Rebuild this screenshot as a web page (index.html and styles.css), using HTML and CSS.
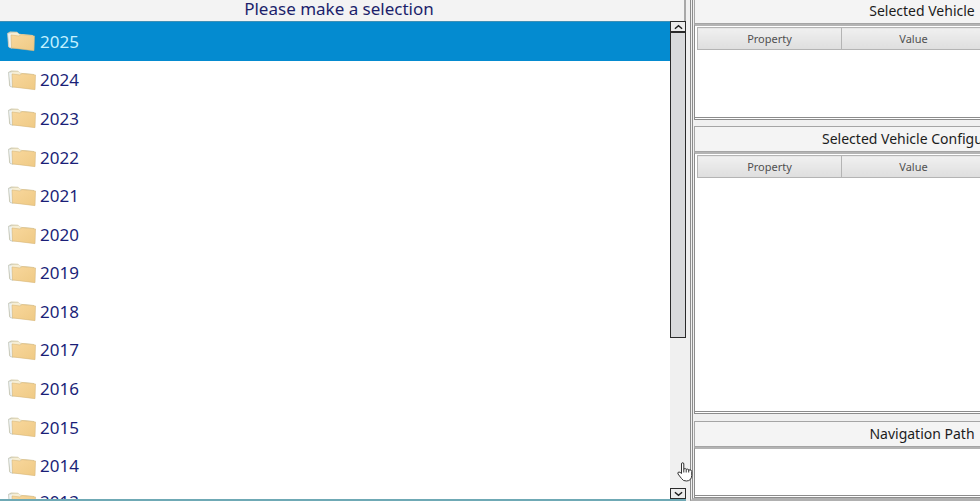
FILE: index.html
```html
<!DOCTYPE html>
<html lang="en">
<head>
  <meta charset="UTF-8" />
  <meta name="viewport" content="width=device-width, initial-scale=1.0"/>
  <title>Vehicle Selection</title>
  <link rel="stylesheet" href="styles.css">
</head>
<body>

  <!-- Folder icon shared by all rows -->
  <svg class="sprite" width="0" height="0" aria-hidden="true">
    <defs>
      <linearGradient id="paper" x1="0" y1="0" x2="1" y2="1">
        <stop offset="0" stop-color="#f8d79c"/>
        <stop offset="1" stop-color="#efca85"/>
      </linearGradient>
      <symbol id="folder" viewBox="0 0 30 24" preserveAspectRatio="none">
        <path d="M1.500 3.500 L4 1.500 L11 2 L13 4 L27 5.500 L27 20 L5 20 L2 18 Z" fill="#d8cfae"/>
        <path d="M1.500 3.500 L6 3 L6 20 L3 19 Z" fill="#eef3f3" stroke="#b5bdb5" stroke-width=".6"/>
        <path d="M4 3 L11.500 3 L13.500 5 L26 6 L26 9 L6 7 Z" fill="#f6eed5"/>
        <path d="M5 5.500 L13 6.500 L15 5 L28.500 6.500 L28 22.500 L5.500 19.500 Z" fill="url(#paper)" stroke="#d6b87c" stroke-width=".6"/>
      </symbol>
    </defs>
  </svg>

  <div class="app">
    <main class="selection">
      <h1 class="selection-title">Please make a selection</h1>
      <div class="selection-body">
        <ul class="years">
          <li><button class="year selected" type="button"><svg class="icon"><use href="#folder"/></svg>2025</button></li>
          <li><button class="year" type="button"><svg class="icon"><use href="#folder"/></svg>2024</button></li>
          <li><button class="year" type="button"><svg class="icon"><use href="#folder"/></svg>2023</button></li>
          <li><button class="year" type="button"><svg class="icon"><use href="#folder"/></svg>2022</button></li>
          <li><button class="year" type="button"><svg class="icon"><use href="#folder"/></svg>2021</button></li>
          <li><button class="year" type="button"><svg class="icon"><use href="#folder"/></svg>2020</button></li>
          <li><button class="year" type="button"><svg class="icon"><use href="#folder"/></svg>2019</button></li>
          <li><button class="year" type="button"><svg class="icon"><use href="#folder"/></svg>2018</button></li>
          <li><button class="year" type="button"><svg class="icon"><use href="#folder"/></svg>2017</button></li>
          <li><button class="year" type="button"><svg class="icon"><use href="#folder"/></svg>2016</button></li>
          <li><button class="year" type="button"><svg class="icon"><use href="#folder"/></svg>2015</button></li>
          <li><button class="year" type="button"><svg class="icon"><use href="#folder"/></svg>2014</button></li>
          <li><button class="year cut" type="button"><svg class="icon"><use href="#folder"/></svg>2013</button></li>
        </ul>
        <div class="scrollbar">
          <button class="scroll-button" type="button" aria-label="Scroll up"><svg viewBox="0 0 10 6"><path d="M1 5 L5 1.500 L9 5"/></svg></button>
          <div class="track"><div class="thumb"></div></div>
          <button class="scroll-button" type="button" aria-label="Scroll down"><svg viewBox="0 0 10 6"><path d="M1 1 L5 4.500 L9 1"/></svg></button>
        </div>
      </div>
    </main>

    <aside class="details">
      <section class="panel vehicle">
        <h2>Selected Vehicle</h2>
        <div class="panel-box">
          <table>
            <thead><tr><th>Property</th><th>Value</th><th></th></tr></thead>
          </table>
        </div>
      </section>
      <section class="panel configuration">
        <h2>Selected Vehicle Configuration</h2>
        <div class="panel-box">
          <table>
            <thead><tr><th>Property</th><th>Value</th><th></th></tr></thead>
          </table>
        </div>
      </section>
      <section class="panel path">
        <h2>Navigation Path</h2>
        <div class="panel-box"></div>
      </section>
    </aside>

    <svg class="pointer" viewBox="0 0 16 20" aria-hidden="true">
      <path d="M4.500 11.500 V2 Q4.500 .7 5.700 .7 Q6.800 .7 6.800 2 V7 Q8.500 5.800 9.200 7.300 Q11 6.300 11.700 8 Q14.500 7 14.700 9.500 V13.500 Q14.500 18.800 9.500 19 Q6 19.200 4.500 16.500 L1 12 Q.3 10.200 2 10 Q3 10 4.500 11.500 Z M6.800 7 V10.500 M9.200 7.300 V10.500 M11.700 8 V10.500"/>
    </svg>
  </div>

</body>
</html>
```
FILE: styles.css
```css
* {
  box-sizing: border-box;
}

body {
  margin: 0;
  font-family: "Noto Sans", "Open Sans", sans-serif;
  color: #1c1c1c;
  background-color: #f0f0f0;
  overflow: hidden;
}

.sprite {
  position: absolute;
}

.app {
  position: relative;
  display: flex;
  height: 100vh;
  overflow: hidden;
}

/* Left side: list of years */
.selection {
  flex: 0 0 70%;
  display: flex;
  flex-direction: column;
  background-color: #f3f3f3;
  border-bottom: 2px solid #6fa9b5;
}

.selection-title {
  margin: 0;
  height: 21px;
  padding-right: 6px;
  font-size: 17px;
  font-weight: 400;
  line-height: 18px;
  text-align: center;
  color: #1b1f6b;
  border-right: 2px solid #a8a8a8;
}

.selection-body {
  flex: 1;
  min-height: 0;
  display: flex;
}

/* twelve full rows, the next one is cut by the bottom edge */
.years {
  flex: 1;
  display: grid;
  grid-template-rows: repeat(12, minmax(0, 1fr)) 14px;
  margin: 0;
  padding: 0;
  list-style: none;
  background-color: #fff;
  border-top: 1px solid #3f8fb5;
  overflow: hidden;
}

.year {
  display: flex;
  align-items: center;
  gap: 3px;
  width: 100%;
  height: 100%;
  padding: 0 7px;
  border: 0;
  background: none;
  font-family: inherit;
  font-size: 17px;
  text-align: left;
  color: #1b1f78;
}

.year.selected {
  padding-left: 6px;
  gap: 4px;
  background-color: #048bd0;
  color: #c3f1ff;
}

.year.cut {
  height: 34px;
}

.icon {
  width: 30px;
  height: 22px;
}

.scrollbar {
  display: flex;
  flex-direction: column;
  width: 16px;
  background-color: #f0f0f0;
}

.scroll-button {
  display: flex;
  align-items: center;
  justify-content: center;
  height: 11px;
  padding: 0;
  border: 1px solid #2a2a2a;
  background-color: #ececec;
}

.scroll-button svg {
  width: 9px;
  height: 6px;
  fill: none;
  stroke: #1c1c1c;
  stroke-width: 1.5;
}

.track {
  flex: 1;
}

.thumb {
  height: 67%;
  background-color: #d9dadc;
  border: 1px solid #2a2a2a;
}

/* Right side: runs past the window edge */
.details {
  flex: none;
  display: flex;
  flex-direction: column;
  width: 460px;
  margin-left: 4px;
  border-left: 3px double #8c8c8c;
  border-bottom: 3px solid #b0b0b0;
}

.panel {
  display: flex;
  flex-direction: column;
  margin-left: 1px;
}

.vehicle {
  height: 120px;
}

.configuration {
  flex: 1;
  padding-top: 6px;
}

.path {
  height: 84px;
  padding-top: 7px;
}

.panel h2 {
  height: 26px;
  margin: 0;
  font-size: 14px;
  font-weight: 400;
  line-height: 24px;
  text-align: center;
  background-color: #f4f4f4;
  border: 1px solid #a5a5a5;
}

.vehicle h2 {
  height: 24px;
  line-height: 22px;
  border-top: 0;
}

.panel-box {
  flex: 1;
  padding: 1px 2px;
  background-color: #fff;
  border: 3px double #8c8c8c;
  border-top: 2px solid #b4b4b4;
  border-left: 1px solid #8c8c8c;
}

table {
  width: 100%;
  border-collapse: collapse;
  table-layout: fixed;
}

th {
  width: 144px;
  height: 22px;
  padding: 0;
  font-size: 11px;
  font-weight: 400;
  color: #505050;
  background-image: linear-gradient(#f0f0f0, #dedede);
  border: 1px solid #b4b4b4;
}

th:last-child {
  width: auto;
}

.pointer {
  position: absolute;
  left: 677px;
  top: 462px;
  width: 16px;
  height: 20px;
  fill: #fff;
  stroke: #333;
  stroke-width: 1;
}
```
